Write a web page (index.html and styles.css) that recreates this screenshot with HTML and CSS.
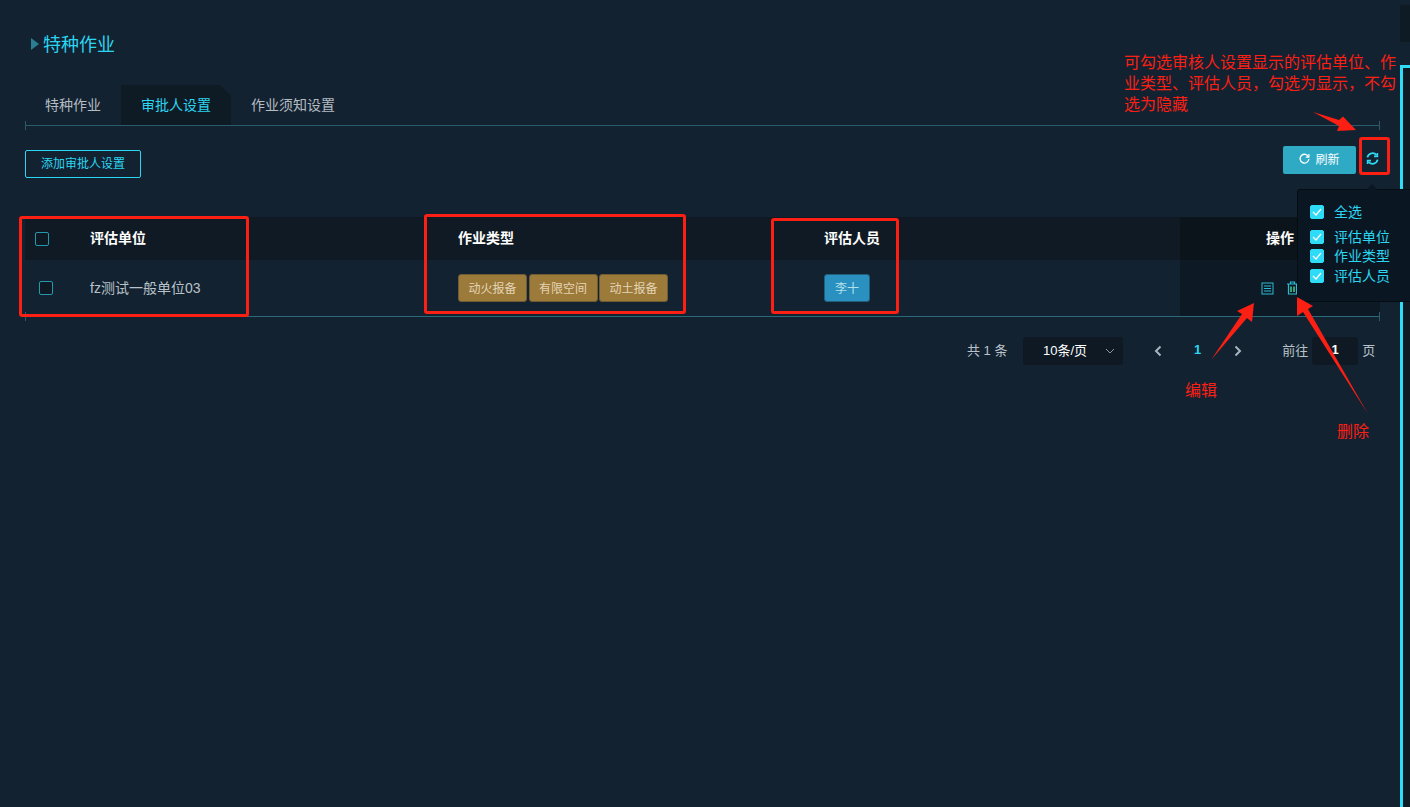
FILE: index.html
```html
<!DOCTYPE html>
<html lang="zh-CN">
<head>
  <meta charset="UTF-8">
  <title>特种作业</title>
  <link rel="stylesheet" href="styles.css">
</head>
<body>
  <div class="page">
    <h1 class="title"><span class="title-mark"></span>特种作业</h1>

    <div class="tabs">
      <a class="tab">特种作业</a>
      <a class="tab tab-active">审批人设置</a>
      <a class="tab">作业须知设置</a>
    </div>

    <div class="toolbar">
      <button type="button" class="add-button">添加审批人设置</button>
      <div class="toolbar-right">
        <button type="button" class="refresh-button">
          <svg width="11" height="11" viewBox="0 0 12 12" fill="none" stroke="#fff" stroke-width="1.5"><path d="M10.4 4.2A4.8 4.8 0 1 0 10.8 6.6"/><path d="M10.800 1v3.400H7.400" stroke-width="1.300"/></svg>
          刷新
        </button>
        <button type="button" class="columns-button">
          <svg width="13" height="13" viewBox="0 0 13 13" fill="none" stroke="#2fd8f2" stroke-width="1.800"><path d="M1.400 5.400A5.200 5.200 0 0 1 10.600 3.200"/><path d="M11.600 7.600A5.200 5.200 0 0 1 2.400 9.800"/><path d="M11.400 1v3.400H8" stroke-width="1.600"/><path d="M1.600 12V8.600H5" stroke-width="1.600"/></svg>
        </button>
      </div>
    </div>

    <div class="table">
      <div class="row row-head">
        <div class="cell cell-check"><span class="check"></span></div>
        <div class="cell cell-text">评估单位</div>
        <div class="cell cell-text">作业类型</div>
        <div class="cell cell-text">评估人员</div>
        <div class="cell cell-text cell-ops">操作</div>
      </div>
      <div class="row row-body">
        <div class="cell cell-check"><span class="check check-row"></span></div>
        <div class="cell cell-text">fz测试一般单位03</div>
        <div class="cell cell-tags">
          <span class="tag tag-gold">动火报备</span>
          <span class="tag tag-gold">有限空间</span>
          <span class="tag tag-gold">动土报备</span>
        </div>
        <div class="cell"><span class="tag tag-blue">李十</span></div>
        <div class="cell cell-ops cell-icons">
          <svg width="13" height="13" viewBox="0 0 13 13" fill="none" stroke="#2bbcd4" stroke-width="1"><rect x="1" y="1" width="11" height="11"/><path d="M3 4h7M3 6.5h7M3 9h7"/></svg>
          <svg width="13" height="14" viewBox="0 0 13 14" fill="none" stroke="#2bbcd4" stroke-width="1.200"><path d="M2.500 3.500v9.500h8V3.500M1 3h11M4.500 3V1h4v2"/><path d="M5 5.500V11M8 5.500V11" stroke-width="1.600" stroke="#3fc48f"/></svg>
        </div>
      </div>
    </div>

    <div class="pager">
      <span class="pager-total">共 1 条</span>
      <div class="pager-size">10条/页
        <svg width="10" height="6" viewBox="0 0 10 6" fill="none" stroke="#8a97a3" stroke-width="1"><path d="M1 1l4 4 4-4"/></svg>
      </div>
      <svg class="pager-prev" width="8" height="12" viewBox="0 0 8 12" fill="none" stroke="#a9b4bd" stroke-width="2"><path d="M6.500 1.500L2 6l4.500 4.500"/></svg>
      <span class="pager-num">1</span>
      <svg class="pager-next" width="8" height="12" viewBox="0 0 8 12" fill="none" stroke="#a9b4bd" stroke-width="2"><path d="M1.500 1.500L6 6l-4.500 4.500"/></svg>
      <span class="pager-goto">前往</span>
      <div class="pager-input">1</div>
      <span class="pager-unit">页</span>
    </div>
  </div>

  <!-- neighbouring window edge -->
  <div class="edge-top"></div>
  <div class="edge-frame"></div>

  <!-- columns popover, opened from the sync button -->
  <div class="popover">
    <label class="pop-item pop-all"><span class="check check-on"><svg width="10" height="8" viewBox="0 0 10 8" fill="none" stroke="#fff" stroke-width="1.200"><path d="M1 4l3 3 5-6"/></svg></span>全选</label>
    <label class="pop-item"><span class="check check-on"><svg width="10" height="8" viewBox="0 0 10 8" fill="none" stroke="#fff" stroke-width="1.200"><path d="M1 4l3 3 5-6"/></svg></span>评估单位</label>
    <label class="pop-item"><span class="check check-on"><svg width="10" height="8" viewBox="0 0 10 8" fill="none" stroke="#fff" stroke-width="1.200"><path d="M1 4l3 3 5-6"/></svg></span>作业类型</label>
    <label class="pop-item"><span class="check check-on"><svg width="10" height="8" viewBox="0 0 10 8" fill="none" stroke="#fff" stroke-width="1.200"><path d="M1 4l3 3 5-6"/></svg></span>评估人员</label>
  </div>

  <!-- red review notes on top of the screenshot -->
  <div class="note note-main">可勾选审核人设置显示的评估单位、作<br>业类型、评估人员，勾选为显示，不勾<br>选为隐藏</div>
  <div class="note note-edit">编辑</div>
  <div class="note note-delete">删除</div>
  <div class="mark mark-unit"></div>
  <div class="mark mark-type"></div>
  <div class="mark mark-person"></div>
  <div class="mark mark-sync"></div>
  <svg class="arrows" width="1410" height="807" viewBox="0 0 1410 807" fill="#fb1f14">
    <polygon points="1313,112 1339,120 1343,116.500 1356,130 1337,131 1339,126"/>
    <polygon points="1211,360 1242,314 1237,311 1254,303 1252,322 1247,318"/>
    <polygon points="1368,414 1303,312 1297,316 1297,297 1313,306 1308,309"/>
  </svg>
</body>
</html>
```

FILE: styles.css
```css
html, body {
  margin: 0;
  height: 100%;
}

body {
  background-color: #132231;
  font-family: "Liberation Sans", "Noto Sans CJK SC", sans-serif;
  font-size: 13px;
  color: #b9c2c9;
  overflow: hidden;
}

.page {
  width: 1355px;
  margin-left: 25px;
  padding-top: 32px;
}

.title {
  display: flex;
  align-items: center;
  height: 22px;
  margin: 0 0 31px;
  font-size: 18px;
  font-weight: normal;
  color: #2bd6f2;
}

.title-mark {
  width: 0;
  height: 0;
  margin: 2px 4px 0 6px;
  border-left: 8px solid #2a7d92;
  border-top: 6px solid transparent;
  border-bottom: 6px solid transparent;
}

/* Tabs */
.tabs {
  position: relative;
  display: flex;
  height: 40px;
  border-bottom: 1px solid #2b5a6a;
}

.tabs::before,
.tabs::after,
.table::before,
.table::after {
  content: "";
  position: absolute;
  bottom: -5px;
  width: 1px;
  height: 9px;
  background: #2b5a6a;
}

.tabs::before,
.table::before {
  left: 0;
}

.tabs::after,
.table::after {
  right: 0;
}

.tab {
  display: flex;
  align-items: center;
  padding: 0 20px 2px;
  font-size: 14px;
  color: #b4bcc2;
}

.tab-active {
  background: #0e1a24;
  color: #2bd6f2;
  clip-path: polygon(0 0, calc(100% - 11px) 0, 100% 11px, 100% 100%, 0 100%);
}

/* Toolbar */
.toolbar {
  display: flex;
  justify-content: space-between;
  align-items: flex-start;
  margin-top: 20px;
  height: 71px;
}

.add-button {
  width: 116px;
  height: 28px;
  margin-top: 4px;
  padding: 0 0 3px;
  background: transparent;
  border: 1px solid #2bd6f2;
  border-radius: 2px;
  color: #2bd6f2;
  font: inherit;
  font-size: 12px;
}

.toolbar-right {
  display: flex;
  margin-right: -8px;
}

.refresh-button {
  display: flex;
  align-items: center;
  justify-content: center;
  gap: 5px;
  width: 73px;
  height: 28px;
  padding: 0 0 3px;
  background: #2eaac4;
  border: none;
  border-radius: 2px;
  color: #fff;
  font: inherit;
  font-size: 12px;
}

.columns-button {
  display: flex;
  align-items: center;
  justify-content: center;
  width: 32px;
  height: 28px;
  padding: 0 0 4px;
  background: transparent;
  border: none;
}

/* Table */
.table {
  position: relative;
  border-bottom: 1px solid #2b6a78;
}

.row {
  display: grid;
  grid-template-columns: 55px 368px 366px 366px 200px;
  font-size: 14px;
}

.row-head {
  height: 43px;
  background: #0f1a24;
  color: #fff;
  font-weight: bold;
}

.row-head .cell-text {
  padding-bottom: 4px;
}

.row-body {
  height: 56px;
}

.cell {
  display: flex;
  align-items: center;
  padding-left: 10px;
}

.cell-text {
  padding-bottom: 2px;
  box-sizing: border-box;
}

.cell-tags {
  gap: 1.500px;
}

.cell-ops {
  justify-content: center;
  padding-left: 0;
  background: #0b141b;
}

.cell-icons {
  gap: 12px;
  background: #0d1a26;
}

.check {
  display: inline-flex;
  align-items: center;
  justify-content: center;
  width: 12px;
  height: 12px;
  background: #0d1a24;
  border: 1px solid #2698ae;
  border-radius: 2px;
}

.check-row {
  margin-left: 4px;
}

.check-on {
  margin-top: 2px;
  background: #2fdcf8;
  border-color: #2fdcf8;
}

.tag {
  display: inline-flex;
  align-items: center;
  justify-content: center;
  box-sizing: border-box;
  height: 28px;
  padding-bottom: 2px;
  border: 1px solid;
  border-radius: 3px;
  font-size: 12px;
  font-weight: normal;
}

.tag-gold {
  width: 69px;
  background: #9c7a3a;
  border-color: #6f5b34;
  color: #e3d5b5;
}

.tag-blue {
  width: 46px;
  background: #2a90bf;
  border-color: #215f7d;
  color: #b2e0ec;
}

/* Pagination */
.pager {
  display: flex;
  align-items: center;
  height: 28px;
  margin-top: 20px;
  padding-left: 942px;
}

.pager > span,
.pager-size,
.pager-input {
  box-sizing: border-box;
  padding-bottom: 4px;
}

.pager-total {
  width: 56px;
}

.pager-size {
  position: relative;
  display: flex;
  align-items: center;
  width: 100px;
  height: 28px;
  padding-left: 20px;
  background: #0e1924;
  border-radius: 3px;
  color: #fff;
}

.pager-size svg {
  position: absolute;
  right: 8px;
  top: 11px;
}

.pager-prev {
  margin-left: 31px;
}

.pager-num {
  margin-left: 32px;
  color: #2bd6f2;
  font-weight: bold;
}

.pager-next {
  margin-left: 33px;
}

.pager-goto {
  margin-left: 40px;
  width: 30px;
}

.pager-input {
  display: flex;
  align-items: center;
  justify-content: center;
  width: 46px;
  height: 28px;
  margin-right: 4px;
  background: #0e1924;
  border-radius: 3px;
  color: #fff;
  font-weight: bold;
}

/* Popover */
.popover {
  position: absolute;
  left: 1297px;
  top: 189px;
  width: 113px;
  height: 113px;
  box-sizing: border-box;
  padding: 11px 0 0 12px;
  background: #0a1722;
  border: 1px solid #050c12;
  border-right: none;
  border-radius: 4px 0 0 4px;
  color: #2bd6f2;
  font-size: 14px;
}

.popover::before {
  content: "";
  position: absolute;
  left: 68px;
  top: -6px;
  border-left: 6px solid transparent;
  border-right: 6px solid transparent;
  border-bottom: 6px solid #0a1722;
}

.pop-item {
  display: flex;
  align-items: center;
  gap: 10px;
  height: 19.500px;
}

.pop-all {
  height: 25px;
  margin-top: -3px;
  margin-bottom: 3px;
}

/* Window edge on the right */
.edge-top {
  position: absolute;
  left: 1400px;
  top: 5px;
  width: 10px;
  height: 37px;
  background: #0e1a24;
}

.edge-frame {
  position: absolute;
  left: 1400px;
  top: 65px;
  width: 10px;
  height: 742px;
  box-sizing: border-box;
  background: #0f1a24;
  border-left: 3px solid #2fdcf8;
  border-top: 3px solid #2fdcf8;
}

/* Review notes */
.note {
  position: absolute;
  color: #fb1f14;
  font-size: 16px;
  line-height: 21px;
  white-space: nowrap;
}

.note-main {
  left: 1124px;
  top: 52px;
}

.note-edit {
  left: 1185px;
  top: 380px;
}

.note-delete {
  left: 1337px;
  top: 421px;
}

.mark {
  position: absolute;
  box-sizing: border-box;
  border: 3px solid #fb1f14;
  border-radius: 3px;
}

.mark-unit {
  left: 19px;
  top: 216px;
  width: 230px;
  height: 101px;
}

.mark-type {
  left: 424px;
  top: 214px;
  width: 262px;
  height: 100px;
}

.mark-person {
  left: 771px;
  top: 218px;
  width: 128px;
  height: 96px;
}

.mark-sync {
  left: 1359px;
  top: 137px;
  width: 31px;
  height: 38px;
}

.arrows {
  position: absolute;
  left: 0;
  top: 0;
  pointer-events: none;
}
```
